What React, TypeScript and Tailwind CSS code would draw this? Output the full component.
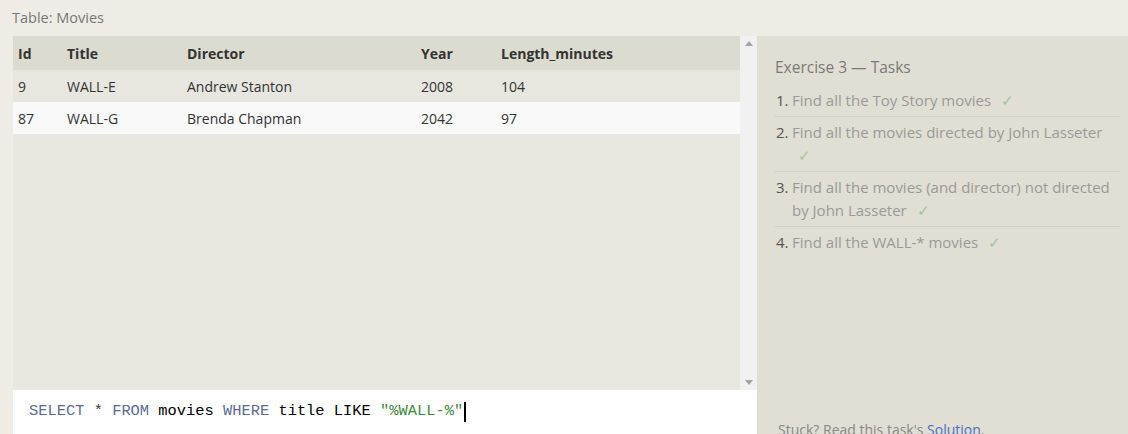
import { Fragment } from "react"

const rows = [
  { id: "9", title: "WALL-E", director: "Andrew Stanton", year: "2008", length: "104" },
  { id: "87", title: "WALL-G", director: "Brenda Chapman", year: "2042", length: "97" },
]

const tasks = [
  "Find all the Toy Story movies",
  "Find all the movies directed by John Lasseter",
  "Find all the movies (and director) not directed by John Lasseter",
  "Find all the WALL-* movies",
]

const cols = "grid grid-cols-[49px_120px_234px_80px_1fr]"

function Check() {
  return <span className="ml-[6px] text-[#9cc89c]">✓</span>
}

export default function App() {
  return (
    <div className="flex h-[434px] w-[1128px] flex-col overflow-hidden bg-[#efece6] font-['Open_Sans',sans-serif] text-[#333]">
      {/* Title */}
      <div className="flex h-[36px] shrink-0 items-center px-[12px] text-[14.5px] text-[#777]">
        Table: Movies
      </div>

      <div className="flex min-h-0 flex-1">
        {/* Left: table + editor */}
        <div className="ml-[13px] flex w-[744px] flex-col">
          <div className="flex min-h-0 flex-1">
            <div className="flex-1 bg-[#e9e8e0] text-[14px]">
              <div className={`${cols} h-[34px] items-center bg-[#dcdbd0] px-[5px] font-bold`}>
                <div>Id</div>
                <div>Title</div>
                <div>Director</div>
                <div>Year</div>
                <div>Length_minutes</div>
              </div>
              {rows.map((r, i) => (
                <div
                  key={r.id}
                  className={`${cols} h-[32px] items-center px-[5px] ${i % 2 === 0 ? "bg-[#e8e7df]" : "bg-[#f9f9f9]"}`}
                >
                  <div>{r.id}</div>
                  <div>{r.title}</div>
                  <div>{r.director}</div>
                  <div>{r.year}</div>
                  <div>{r.length}</div>
                </div>
              ))}
            </div>
            {/* Scrollbar */}
            <div className="flex w-[17px] flex-col items-center justify-between bg-[#f1f1f1] py-[5px]">
              <svg width="8" height="5" viewBox="0 0 8 5">
                <path d="M4 0 L8 5 L0 5 Z" fill="#a3a3a3" />
              </svg>
              <svg width="8" height="5" viewBox="0 0 8 5">
                <path d="M0 0 L8 0 L4 5 Z" fill="#a3a3a3" />
              </svg>
            </div>
          </div>

          {/* SQL editor */}
          <div className="flex h-[44px] shrink-0 items-center bg-white pl-[16px] font-['Liberation_Mono',monospace] text-[15.4px]">
            <span className="text-[#5a6b94]">SELECT</span>
            <span className="whitespace-pre"> * </span>
            <span className="text-[#5a6b94]">FROM</span>
            <span className="whitespace-pre text-black"> movies </span>
            <span className="text-[#5a6b94]">WHERE</span>
            <span className="whitespace-pre text-black"> title LIKE </span>
            <span className="text-[#3c8a3c]">"%WALL-%"</span>
            <span className="ml-[1px] h-[20px] w-[2px] bg-black" />
          </div>
        </div>

        {/* Right: tasks */}
        <div className="flex flex-1 flex-col bg-[#e1ded3] pl-[18px] pr-[8px]">
          <div className="mt-[20px] text-[15.5px] text-[#7a7a7a]">Exercise 3 — Tasks</div>
          <ol className="mt-[6px] text-[15px] leading-[23px]">
            {tasks.map((t, i) => (
              <Fragment key={t}>
                <li className={`flex py-[4px] pl-[1px] ${i > 0 ? "border-t border-[#d2cfc4]" : ""}`}>
                  <span className="w-[16px] shrink-0 text-[#555]">{i + 1}.</span>
                  <span className="text-[#9a9a9a]">
                    {t} <Check />
                  </span>
                </li>
              </Fragment>
            ))}
          </ol>
          <div className="mb-[-4px] ml-[3px] mt-auto text-[14px] leading-[16px] text-[#888]">
            Stuck? Read this task's <span className="text-[#4a6fc4]">Solution</span>.
          </div>
        </div>
      </div>
    </div>
  )
}
